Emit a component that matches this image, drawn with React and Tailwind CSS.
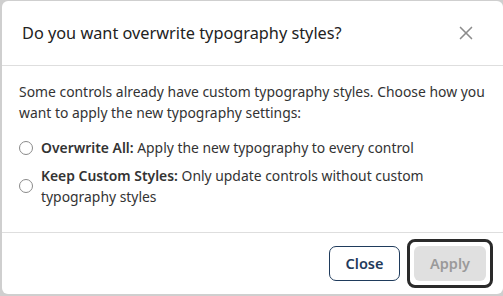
import { X } from 'lucide-react';

const Radio = () => (
  <span className="inline-block h-[14px] w-[14px] shrink-0 rounded-full border border-[#8a8a8a] bg-white" />
);

const App = () => {
  return (
    <div className="h-[296px] w-[503px] bg-[#cfcfcf] pl-[2px] pt-[1px] pb-[2px]" style={{ fontFamily: '"Noto Sans", sans-serif' }}>
      <div className="flex h-full w-full flex-col rounded-[6px] bg-white text-[#333]">
        <div className="flex h-[65px] shrink-0 items-center justify-between border-b border-[#dedede] pl-[20px] pr-[26px]">
          <h2 className="text-[16.3px] font-normal text-[#222]">Do you want overwrite typography styles?</h2>
          <X className="h-[22px] w-[22px] text-[#8c8c8c]" strokeWidth={1.8} />
        </div>

        <div className="flex-1 pl-[17px] pr-0 pt-[15px] text-[13.9px] leading-[21px]">
          <p className="whitespace-nowrap">Some controls already have custom typography styles. Choose how you</p>
          <p>want to apply the new typography settings:</p>
          <div className="mt-[14px] flex items-center gap-[8px]">
            <Radio />
            <p><b className="font-semibold">Overwrite All:</b> Apply the new typography to every control</p>
          </div>
          <div className="mt-[7px] flex items-center gap-[8px]">
            <Radio />
            <p>
              <span className="whitespace-nowrap"><b className="font-semibold">Keep Custom Styles:</b> Only update controls without custom</span>
              <br />
              typography styles
            </p>
          </div>
        </div>

        <div className="flex h-[62px] shrink-0 items-center justify-end gap-[7px] border-t border-[#dedede] pr-[10px]">
          <button className="h-[35px] w-[71px] rounded-[7px] border border-[#1f3b5c] text-[14.5px] font-semibold text-[#1f3b5c]">
            Close
          </button>
          <div className="rounded-[8px] border-[3px] border-[#2a2a2a] p-[4px]">
            <button className="h-[35px] w-[72px] rounded-[6px] bg-[#e0e0e0] text-[14.5px] font-semibold text-[#9a9a9a]">
              Apply
            </button>
          </div>
        </div>
      </div>
    </div>
  );
};

export default App;
